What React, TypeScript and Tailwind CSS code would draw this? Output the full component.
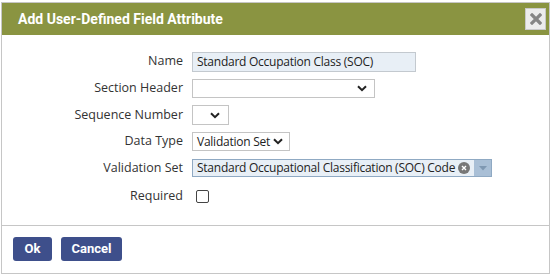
import React from "react";

const Chevron = () => (
  <svg width="10" height="7" viewBox="0 0 10 7" className="shrink-0">
    <path d="M1 1.2 L5 5.2 L9 1.2" fill="none" stroke="#222" strokeWidth="2" />
  </svg>
);

const Label = ({ children }: { children: React.ReactNode }) => (
  <div className="w-[181px] shrink-0 text-right text-[12.5px] text-[#333] whitespace-nowrap">
    {children}
  </div>
);

export default function App() {
  return (
    <div className="w-[552px] h-[275px] bg-white relative overflow-hidden" style={{ fontFamily: "'Open Sans', sans-serif" }}>
      <div className="absolute left-[1px] top-[2px] w-[549px] h-[272px] border border-[#c6c6c6] bg-white flex flex-col">
        <div className="h-[32px] bg-[#8a9441] flex items-center justify-between pl-[16px] pr-[3px] shrink-0">
          <span className="text-white font-bold text-[14px]" style={{ fontFamily: "Roboto, sans-serif" }}>
            Add User-Defined Field Attribute
          </span>
          <div className="w-[21px] h-[22px] bg-[#ececec] border border-[#c9c9c9] flex items-center justify-center">
            <svg width="12" height="12" viewBox="0 0 12 12">
              <path d="M2 2 L10 10 M10 2 L2 10" stroke="#858585" strokeWidth="3.2" strokeLinecap="square" />
            </svg>
          </div>
        </div>
        <div className="flex flex-col pt-[16px] h-[191px] border-b border-[#c6c6c6] shrink-0">
          <div className="flex items-center h-[21px]">
            <Label>Name</Label>
            <div className="ml-[9px] w-[224px] h-[20px] bg-[#e8eff6] border border-[#c3c9cf] text-[12px] tracking-[-0.25px] text-[#222] flex items-center pl-[4px] whitespace-nowrap">
              Standard Occupation Class (SOC)
            </div>
          </div>
          <div className="flex items-center h-[19px] mt-[7px]">
            <Label>Section Header</Label>
            <div className="ml-[9px] w-[183px] h-[19px] bg-white border border-[#c4c4c4] flex items-center justify-end pr-[7px]">
              <Chevron />
            </div>
          </div>
          <div className="flex items-center h-[20px] mt-[7px]">
            <Label>Sequence Number</Label>
            <div className="ml-[9px] w-[37px] h-[20px] bg-white border border-[#c4c4c4] flex items-center justify-end pr-[8px]">
              <Chevron />
            </div>
          </div>
          <div className="flex items-center h-[19px] mt-[7px]">
            <Label>Data Type</Label>
            <div className="ml-[9px] w-[98px] h-[19px] bg-white border border-[#c4c4c4] flex items-center pl-[4px] text-[12px] tracking-[-0.25px] text-[#222] gap-[3px] whitespace-nowrap">
              <span>Validation Set</span>
              <Chevron />
            </div>
          </div>
          <div className="flex items-center h-[18px] mt-[8px]">
            <Label>Validation Set</Label>
            <div className="ml-[9px] w-[300px] h-[18px] bg-[#e8eff6] border border-[#8fa9c3] flex items-center text-[12px] tracking-[-0.25px] text-[#222]">
              <span className="pl-[4px] flex-1 overflow-hidden whitespace-nowrap">Standard Occupational Classification (SOC) Code :</span>
              <span className="w-[12px] h-[12px] rounded-full bg-[#777] flex items-center justify-center mr-[4px] shrink-0">
                <svg width="6" height="6" viewBox="0 0 6 6">
                  <path d="M1 1 L5 5 M5 1 L1 5" stroke="#fff" strokeWidth="1.4" />
                </svg>
              </span>
              <span className="w-[17px] h-full bg-[#a9bfd6] flex items-center justify-center shrink-0">
                <svg width="8" height="5" viewBox="0 0 8 5">
                  <path d="M0 0 L8 0 L4 4.5 Z" fill="#7f98b2" />
                </svg>
              </span>
            </div>
          </div>
          <div className="flex items-center h-[13px] mt-[13px]">
            <Label>Required</Label>
            <div className="ml-[13px] w-[13px] h-[13px] border border-[#444] rounded-[2px] bg-white" />
          </div>
        </div>
        <div className="flex items-center gap-[9px] pl-[11px] pt-[11px]">
          <button className="w-[39px] h-[24px] bg-[#3e4f8b] text-white font-bold text-[13px] rounded-[3px]" style={{ fontFamily: "Roboto, sans-serif" }}>
            Ok
          </button>
          <button className="w-[61px] h-[24px] bg-[#3e4f8b] text-white font-bold text-[13px] rounded-[3px]" style={{ fontFamily: "Roboto, sans-serif" }}>
            Cancel
          </button>
        </div>
      </div>
    </div>
  );
}
